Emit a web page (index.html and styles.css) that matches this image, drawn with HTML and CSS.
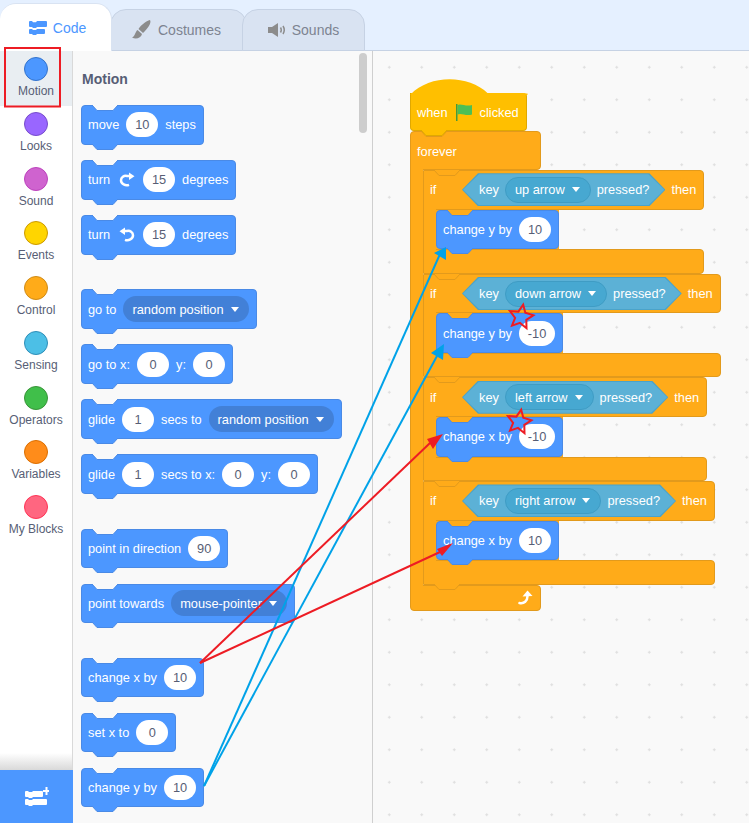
FILE: index.html
```html
<!DOCTYPE html>
<html>
  <head>
    <meta charset="utf-8">
    <title>Scratch editor</title>
    <link rel="stylesheet" href="styles.css">
  </head>
  <body>
  <svg class="defs" width="0" height="0">
    <defs>
      <path id="joint" d="M0 0 L5 5.5 H21 L26 0"/>
      <g id="turn">
        <path fill="none" stroke="#fff" stroke-width="2.500" d="M10 11.800 C6.500 13.200 2 11 2 7.300 C2 4.300 5 2.300 8 3 H10.500"/>
        <path fill="#fff" d="M10 -0.500 L15.500 3.200 L10 7 Z"/>
      </g>
    </defs>
  </svg>

  <div id="app">
    <div class="tabs">
      <div class="tab tab-code">
        <svg width="18" height="14" viewBox="0 0 18 14"><path fill="#4c97ff" d="M1 0 H3 L4 1.2 H7 L8 0 H17 Q18 0 18 1 V5 Q18 6 17 6 H8 L7 7 H4 L3 6 H1 Q0 6 0 5 V1 Q0 0 1 0 Z M1 8 H3 L4 9 H7 L8 8 H15 Q16 8 16 9 V12 Q16 13 15 13 H8 L7 14 H4 L3 13 H1 Q0 13 0 12 V9 Q0 8 1 8 Z"/></svg>
        Code
      </div>
      <div class="tab tab-costumes">
        <svg width="20" height="20" viewBox="0 0 20 20"><path fill="#8c8c8c" d="M18 0 C20 3 15 9 11 13 L6.500 9 C9 5 14 1 18 0 Z M5.500 10 L10 14 C9 18 4 20 0 17.500 C3 16.500 3 12 5.500 10 Z"/></svg>
        Costumes
      </div>
      <div class="tab tab-sounds">
        <svg width="18" height="14" viewBox="0 0 18 14"><path fill="#8c8c8c" d="M0 4 H4 L10 0 V14 L4 10 H0 Z"/><path fill="none" stroke="#8c8c8c" stroke-width="1.500" d="M12.500 4.500 Q14 7 12.500 9.500 M15 3 Q17.500 7 15 11"/></svg>
        Sounds
      </div>
    </div>

    <div class="main">
      <div class="sidebar">
        <div class="cat active"><span class="dot dot-motion"></span>Motion</div>
        <div class="cat"><span class="dot dot-looks"></span>Looks</div>
        <div class="cat"><span class="dot dot-sound"></span>Sound</div>
        <div class="cat"><span class="dot dot-events"></span>Events</div>
        <div class="cat"><span class="dot dot-control"></span>Control</div>
        <div class="cat"><span class="dot dot-sensing"></span>Sensing</div>
        <div class="cat"><span class="dot dot-operators"></span>Operators</div>
        <div class="cat"><span class="dot dot-variables"></span>Variables</div>
        <div class="cat"><span class="dot dot-myblocks"></span>My Blocks</div>
        <div class="extensions">
          <svg width="24" height="20" viewBox="0 0 24 20"><path fill="#fff" d="M1 4 H3 L4 5 H7 L8 4 H17 Q18 4 18 5 V9 Q18 10 17 10 H8 L7 11 H4 L3 10 H1 Q0 10 0 9 V5 Q0 4 1 4 Z M1 12 H3 L4 13 H7 L8 12 H21 Q22 12 22 13 V17 Q22 18 21 18 H8 L7 19 H4 L3 18 H1 Q0 18 0 17 V13 Q0 12 1 12 Z M20.500 0 H22.500 V3 H25 V5 H22.500 V8 H20.500 V5 H18 V3 H20.500 Z"/></svg>
        </div>
      </div>

      <div class="palette">
        <div class="palette-title">Motion</div>

        <div class="block"><svg class="notch"><use href="#joint"/></svg>move <span class="val">10</span> steps<svg class="bump"><use href="#joint"/></svg></div>
        <div class="block"><svg class="notch"><use href="#joint"/></svg>turn <svg class="turn" width="16" height="14"><use href="#turn"/></svg> <span class="val">15</span> degrees<svg class="bump"><use href="#joint"/></svg></div>
        <div class="block"><svg class="notch"><use href="#joint"/></svg>turn <svg class="turn turn-left" width="16" height="14"><use href="#turn"/></svg> <span class="val">15</span> degrees<svg class="bump"><use href="#joint"/></svg></div>

        <div class="block group"><svg class="notch"><use href="#joint"/></svg>go to <span class="menu">random position <i class="caret"></i></span><svg class="bump"><use href="#joint"/></svg></div>
        <div class="block"><svg class="notch"><use href="#joint"/></svg>go to x: <span class="val">0</span> y: <span class="val">0</span><svg class="bump"><use href="#joint"/></svg></div>
        <div class="block"><svg class="notch"><use href="#joint"/></svg>glide <span class="val">1</span> secs to <span class="menu">random position <i class="caret"></i></span><svg class="bump"><use href="#joint"/></svg></div>
        <div class="block"><svg class="notch"><use href="#joint"/></svg>glide <span class="val">1</span> secs to x: <span class="val">0</span> y: <span class="val">0</span><svg class="bump"><use href="#joint"/></svg></div>

        <div class="block group"><svg class="notch"><use href="#joint"/></svg>point in direction <span class="val">90</span><svg class="bump"><use href="#joint"/></svg></div>
        <div class="block"><svg class="notch"><use href="#joint"/></svg>point towards <span class="menu">mouse-pointer <i class="caret"></i></span><svg class="bump"><use href="#joint"/></svg></div>

        <div class="block group"><svg class="notch"><use href="#joint"/></svg>change x by <span class="val">10</span><svg class="bump"><use href="#joint"/></svg></div>
        <div class="block"><svg class="notch"><use href="#joint"/></svg>set x to <span class="val">0</span><svg class="bump"><use href="#joint"/></svg></div>
        <div class="block"><svg class="notch"><use href="#joint"/></svg>change y by <span class="val">10</span><svg class="bump"><use href="#joint"/></svg></div>

        <div class="scrollbar"></div>
      </div>

      <div class="workspace">
        <div class="script">
          <div class="block hat">
            <svg class="cap" width="118" height="16"><path d="M0.500 15.500 C20 -4.500 58 -4.500 78 14.500 H117.500 V16 H0.500 Z"/></svg>
            when
            <svg class="flag" width="16" height="17" viewBox="0 0 16 17"><path fill="#45993d" d="M0 0 H1.500 V17 H0 Z"/><path fill="#4cbf56" d="M1.500 1 C5 -1 10 3 16 1 V10.500 C10 12.500 5 8.500 1.500 10.500 Z"/></svg>
            clicked
            <svg class="bump"><use href="#joint"/></svg>
          </div>

          <div class="c forever">
            <div class="block ctrl c-head"><svg class="notch"><use href="#joint"/></svg>forever</div>
            <div class="c-body">
              <div class="arm"></div>
              <div class="stack">

                <div class="c">
                  <div class="block ctrl c-head"><svg class="notch"><use href="#joint"/></svg><span class="if-word">if</span>
                    <div class="hex"><div class="hex-in">key <span class="menu">up arrow <i class="caret"></i></span> pressed?</div></div>
                    then</div>
                  <div class="c-body">
                    <div class="arm"></div>
                    <div class="stack">
                      <div class="block"><svg class="notch"><use href="#joint"/></svg>change y by <span class="val">10</span><svg class="bump"><use href="#joint"/></svg></div>
                    </div>
                  </div>
                  <div class="block ctrl c-foot"></div>
                </div>

                <div class="c">
                  <div class="block ctrl c-head"><svg class="notch"><use href="#joint"/></svg><span class="if-word">if</span>
                    <div class="hex"><div class="hex-in">key <span class="menu">down arrow <i class="caret"></i></span> pressed?</div></div>
                    then</div>
                  <div class="c-body">
                    <div class="arm"></div>
                    <div class="stack">
                      <div class="block"><svg class="notch"><use href="#joint"/></svg>change y by <span class="val val-wide">-10</span><svg class="bump"><use href="#joint"/></svg></div>
                    </div>
                  </div>
                  <div class="block ctrl c-foot"></div>
                </div>

                <div class="c">
                  <div class="block ctrl c-head"><svg class="notch"><use href="#joint"/></svg><span class="if-word">if</span>
                    <div class="hex"><div class="hex-in">key <span class="menu">left arrow <i class="caret"></i></span> pressed?</div></div>
                    then</div>
                  <div class="c-body">
                    <div class="arm"></div>
                    <div class="stack">
                      <div class="block"><svg class="notch"><use href="#joint"/></svg>change x by <span class="val val-wide">-10</span><svg class="bump"><use href="#joint"/></svg></div>
                    </div>
                  </div>
                  <div class="block ctrl c-foot"></div>
                </div>

                <div class="c">
                  <div class="block ctrl c-head"><svg class="notch"><use href="#joint"/></svg><span class="if-word">if</span>
                    <div class="hex"><div class="hex-in">key <span class="menu">right arrow <i class="caret"></i></span> pressed?</div></div>
                    then</div>
                  <div class="c-body">
                    <div class="arm"></div>
                    <div class="stack">
                      <div class="block"><svg class="notch"><use href="#joint"/></svg>change x by <span class="val">10</span><svg class="bump"><use href="#joint"/></svg></div>
                    </div>
                  </div>
                  <div class="block ctrl c-foot"><svg class="bump"><use href="#joint"/></svg></div>
                </div>

              </div>
            </div>
            <div class="block ctrl c-foot c-end">
              <svg width="16" height="15" viewBox="0 0 16 15"><path fill="none" stroke="#fff" stroke-width="2.500" stroke-linecap="round" d="M1.500 13 C6 14 9.500 11 9.500 6"/><path fill="#fff" d="M4.500 6.500 L9.500 0.500 L14.500 6 Z"/></svg>
            </div>
          </div>
        </div>
      </div>
    </div>

    <!-- annotations drawn over the screenshot -->
    <svg class="marks" width="749" height="823">
      <rect class="mark-box" x="5" y="48" width="55" height="58.500"/>
      <g class="mark-blue">
        <path d="M204 786 L440 254"/>
        <path d="M204 786 L437 356"/>
        <polygon points="446,247 434,253 446,260"/>
        <polygon points="444,344 431,353 443,360"/>
      </g>
      <g class="mark-red">
        <path d="M200 663 L430 443"/>
        <path d="M200 663 L440 552"/>
        <polygon points="443,434 427,439 433,449"/>
        <polygon points="453,543 437,549 442,556"/>
      </g>
      <polygon class="mark-star" points="523.2,304.700 525.300,312.800 533.400,315.300 526.300,319.800 526.500,328.200 520,322.900 512,325.700 515.100,317.800 510,311.100 518.400,311.600"/>
      <polygon class="mark-star" transform="translate(-2 105)" points="523.2,304.700 525.300,312.800 533.400,315.300 526.300,319.800 526.500,328.200 520,322.900 512,325.700 515.100,317.800 510,311.100 518.400,311.600"/>
    </svg>
  </div>
  </body>
</html>
```

FILE: styles.css
```css
body {
  margin: 0;
  font-family: "Liberation Sans", Arial, sans-serif;
}
.defs {
  position: absolute;
}
#app {
  position: relative;
  width: 749px;
  height: 823px;
  overflow: hidden;
  display: flex;
  flex-direction: column;
  background-color: #fff;
}

/* tabs */
.tabs {
  height: 50px;
  flex: none;
  display: flex;
  align-items: flex-end;
  background-color: #e5f0ff;
  border-bottom: 1px solid #c6d2e4;
}
.tab {
  display: flex;
  align-items: center;
  justify-content: center;
  gap: 6px;
  height: 42px;
  box-sizing: border-box;
  margin-bottom: -1px;
  font-size: 14px;
  color: #7d8391;
  background-color: #d9e3f2;
  border: 1px solid #c6d2e4;
  border-radius: 16px 16px 0 0;
}
.tab-code {
  position: relative;
  z-index: 1;
  width: 112px;
  height: 48px;
  padding-left: 4px;
  color: #4c97ff;
  background-color: #fff;
  border-color: #d9e3f2;
  border-bottom: none;
  border-left: none;
}
.tab-costumes {
  width: 137px;
  margin-left: -2px;
  padding-right: 4px;
}
.tab-sounds {
  width: 123px;
  margin-left: -5px;
}

.main {
  flex: 1;
  display: flex;
  min-height: 0;
}

/* category list */
.sidebar {
  position: relative;
  width: 73px;
  flex: none;
  box-sizing: border-box;
  display: flex;
  flex-direction: column;
  border-right: 1px solid #d9d9d9;
}
.cat {
  height: 54.750px;
  flex: none;
  box-sizing: border-box;
  padding-top: 6px;
  display: flex;
  flex-direction: column;
  align-items: center;
  gap: 3px;
  font-size: 12px;
  line-height: 14px;
  color: #575e75;
}
.cat.active {
  background-color: #e9eef2;
}
.dot {
  width: 24px;
  height: 24px;
  box-sizing: border-box;
  border-radius: 50%;
  border: 1px solid;
}
.dot-motion { background: #4c97ff; border-color: #3373cc; }
.dot-looks { background: #9966ff; border-color: #774dcb; }
.dot-sound { background: #cf63cf; border-color: #bd42bd; }
.dot-events { background: #ffd500; border-color: #cc9900; }
.dot-control { background: #ffab19; border-color: #cf8b17; }
.dot-sensing { background: #4cbfe6; border-color: #2e8eb8; }
.dot-operators { background: #40bf4a; border-color: #389438; }
.dot-variables { background: #ff8c1a; border-color: #db6e00; }
.dot-myblocks { background: #ff6680; border-color: #ff3355; }
.extensions {
  position: relative;
  margin-top: auto;
  margin-right: -1px;
  height: 53px;
  flex: none;
  display: flex;
  align-items: center;
  justify-content: center;
  background-color: #4c97ff;
}
.extensions::before {
  content: "";
  position: absolute;
  left: 0;
  right: 1px;
  top: -17px;
  height: 17px;
  background: linear-gradient(rgba(217, 217, 217, 0), #d9d9d9);
}

/* block palette */
.palette {
  position: relative;
  width: 299px;
  flex: none;
  box-sizing: border-box;
  padding: 20px 0 0 8px;
  display: flex;
  flex-direction: column;
  gap: 15.330px;
  overflow: hidden;
  --notch: #f9f9f9;
  background-color: #f9f9f9;
}
.palette-title {
  height: 16px;
  margin-left: 1px;
  margin-bottom: 2.670px;
  font-size: 14px;
  line-height: 16px;
  font-weight: bold;
  color: #575e75;
}
.scrollbar {
  position: absolute;
  left: 286px;
  top: 2px;
  width: 8px;
  height: 80px;
  border-radius: 4px;
  background-color: #cdcdcd;
}
.group {
  margin-top: 19.330px;
}

/* blocks */
.block {
  --fill: #4c97ff;
  --edge: #4a8ae6;
  position: relative;
  align-self: flex-start;
  flex: none;
  height: 39.670px;
  box-sizing: border-box;
  padding: 0 7px 0 6px;
  display: flex;
  align-items: center;
  gap: 7px;
  font-size: 12.800px;
  white-space: nowrap;
  color: #fff;
  background-color: var(--fill);
  border: 1px solid var(--edge);
  border-radius: 4px;
}
.notch, .bump {
  position: absolute;
  left: 10px;
  width: 26px;
  height: 7px;
  overflow: visible;
  stroke: var(--edge);
}
.notch {
  top: -1px;
  fill: var(--notch);
}
.bump {
  top: 100%;
  z-index: 2;
  fill: var(--fill);
}
.val {
  flex: none;
  width: 32px;
  height: 25px;
  line-height: 25px;
  text-align: center;
  color: #575e75;
  background-color: #fff;
  border-radius: 13px;
}
.val-wide {
  width: 36px;
}
.menu {
  flex: none;
  height: 26px;
  box-sizing: border-box;
  padding: 0 10px 0 9px;
  display: flex;
  align-items: center;
  gap: 7px;
  background-color: #4280d7;
  border-radius: 13px;
}
.caret {
  width: 0;
  height: 0;
  border-left: 4px solid transparent;
  border-right: 4px solid transparent;
  border-top: 5px solid #fff;
}
.turn {
  margin: 0 1px 0 2px;
  overflow: visible;
}
.turn-left {
  transform: scaleX(-1);
}

/* workspace */
.workspace {
  position: relative;
  flex: 1;
  box-sizing: border-box;
  border-left: 1px solid #cfcfcf;
  background-color: #f9f9f9;
  background-image: radial-gradient(circle, #dedede 1px, transparent 1.200px);
  background-size: 32.500px 32.500px;
}
.script {
  position: absolute;
  left: 37px;
  top: 42px;
  --notch: #ffab19;
  display: flex;
  flex-direction: column;
}
.ctrl {
  --fill: #ffab19;
  --edge: #e29a1c;
}
.hat {
  --fill: #ffbf00;
  --edge: #e0a800;
  width: 117px;
  height: 38px;
  padding-top: 2px;
  gap: 8px;
  border-top: none;
  border-top-left-radius: 0;
  border-top-right-radius: 4px;
}
.cap {
  position: absolute;
  left: -1px;
  top: -14px;
  fill: #ffbf00;
}
.c {
  align-self: flex-start;
  display: flex;
  flex-direction: column;
}
.forever {
  --notch: #ffbf00;
}
.forever > .c-head, .forever > .c-foot {
  width: 131px;
}
.forever > .c-head {
  height: 39px;
  padding-top: 2px;
}
.c-head {
  align-self: stretch;
  border-bottom-left-radius: 0;
  gap: 6px;
}
.c-body {
  display: flex;
  --notch: #ffab19;
}
.arm {
  position: relative;
  z-index: 1;
  width: 13px;
  flex: none;
  margin: -1px 0;
  box-sizing: border-box;
  background-color: #ffab19;
  border-left: 1px solid #e29a1c;
}
.stack {
  display: flex;
  flex-direction: column;
}
/* corners of nested blocks sit on orange, not on the workspace */
.stack .c-head {
  border-top-left-radius: 0;
}
.stack .c-foot {
  border-bottom-left-radius: 0;
}
.c .c .stack {
  background-color: #ffab19;
}
.c-foot {
  align-self: stretch;
  height: 24.410px;
  border-top-left-radius: 0;
}
.c-end {
  height: 26px;
  justify-content: flex-end;
  padding-right: 6px;
}
.if-word {
  width: 26px;
}

/* key pressed? boolean */
.hex {
  flex: none;
  padding: 1px;
  background-color: #4ba3c9;
  clip-path: polygon(16px 0, calc(100% - 16px) 0, 100% 50%, calc(100% - 16px) 100%, 16px 100%, 0 50%);
}
.hex-in {
  height: 31px;
  padding: 0 15px 0 16px;
  display: flex;
  align-items: center;
  gap: 6px;
  background-color: #5cb1d6;
  clip-path: polygon(16px 0, calc(100% - 16px) 0, 100% 50%, calc(100% - 16px) 100%, 16px 100%, 0 50%);
}
.hex .menu {
  background-color: #47a8d1;
  border: 1px solid #3f9cc4;
}

/* annotations */
.marks {
  position: absolute;
  left: 0;
  top: 0;
  z-index: 5;
  pointer-events: none;
}
.mark-box {
  fill: none;
  stroke: #ed1c24;
  stroke-width: 2;
}
.mark-blue path {
  stroke: #00a2e8;
  stroke-width: 2;
  fill: none;
}
.mark-blue polygon {
  fill: #00a2e8;
}
.mark-red path {
  stroke: #ed1c24;
  stroke-width: 2;
  fill: none;
}
.mark-red polygon {
  fill: #ed1c24;
}
.mark-star {
  fill: none;
  stroke: #ed1c24;
  stroke-width: 2;
}
```
